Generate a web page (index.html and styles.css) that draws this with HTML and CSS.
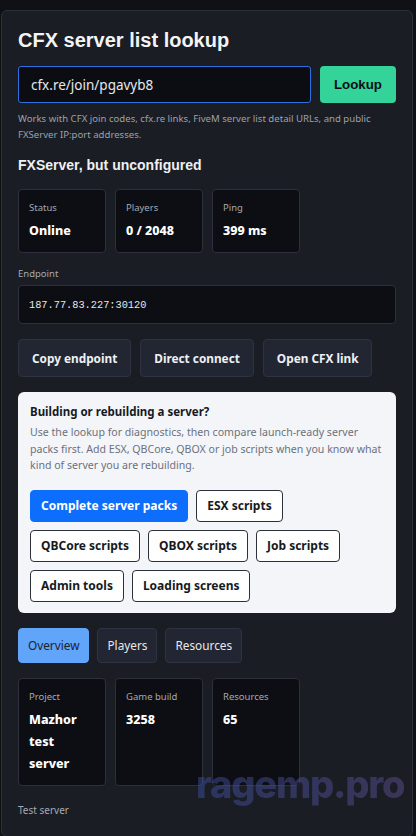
FILE: index.html
```html
<!DOCTYPE html>
<html lang="en">
<head>
  <meta charset="UTF-8">
  <title>CFX server list lookup</title>
  <meta name="viewport" content="width=device-width, initial-scale=1.0">
  <link rel="stylesheet" href="styles.css">
</head>
<body>
  <div class="panel">
    <h1 class="title">CFX server list lookup</h1>

    <div class="search">
      <input class="search-input" type="text" value="cfx.re/join/pgavyb8">
      <button class="lookup-btn">Lookup</button>
    </div>
    <p class="hint">Works with CFX join codes, cfx.re links, FiveM server list detail URLs, and public FXServer IP:port addresses.</p>

    <h2 class="server-name">FXServer, but unconfigured</h2>

    <div class="stats">
      <div class="stat">
        <div class="stat-label">Status</div>
        <div class="stat-value">Online</div>
      </div>
      <div class="stat">
        <div class="stat-label">Players</div>
        <div class="stat-value">0 / 2048</div>
      </div>
      <div class="stat">
        <div class="stat-label">Ping</div>
        <div class="stat-value">399 ms</div>
      </div>
    </div>

    <div class="field-label">Endpoint</div>
    <div class="endpoint">187.77.83.227:30120</div>

    <div class="actions">
      <button class="action-btn">Copy endpoint</button>
      <button class="action-btn">Direct connect</button>
      <button class="action-btn">Open CFX link</button>
    </div>

    <div class="promo">
      <div class="promo-title">Building or rebuilding a server?</div>
      <p class="promo-text">Use the lookup for diagnostics, then compare launch-ready server packs first. Add ESX, QBCore, QBOX or job scripts when you know what kind of server you are rebuilding.</p>
      <div class="pills">
        <a class="pill primary">Complete server packs</a>
        <a class="pill">ESX scripts</a>
        <a class="pill">QBCore scripts</a>
        <a class="pill">QBOX scripts</a>
        <a class="pill">Job scripts</a>
        <a class="pill">Admin tools</a>
        <a class="pill">Loading screens</a>
      </div>
    </div>

    <div class="tabs">
      <button class="tab active">Overview</button>
      <button class="tab">Players</button>
      <button class="tab">Resources</button>
    </div>

    <div class="stats info">
      <div class="stat">
        <div class="stat-label">Project</div>
        <div class="stat-value">Mazhor test server</div>
      </div>
      <div class="stat">
        <div class="stat-label">Game build</div>
        <div class="stat-value">3258</div>
      </div>
      <div class="stat">
        <div class="stat-label">Resources</div>
        <div class="stat-value">65</div>
      </div>
    </div>

    <p class="desc">Test server</p>
  </div>

  <div class="watermark">ragemp.pro</div>
</body>
</html>
```

FILE: styles.css
```css
body {
  margin: 0;
  background: #0f1115;
  font-family: "Noto Sans", "Open Sans", sans-serif;
  color: #e8eaee;
}
.panel {
  margin: 10px 3px 3px 1px;
  background: #1a1d24;
  border: 1px solid #2b303b;
  border-radius: 6px;
  padding: 17px 16px 18px;
}
.title {
  margin: 0 0 14px;
  font-family: "Liberation Sans", Arial, sans-serif;
  font-size: 20px; line-height: 24px; font-weight: 700;
  color: #f3f4f6;
}
.search { display: flex; gap: 9px; }
.search-input {
  flex: 1; min-width: 0; height: 37px; box-sizing: border-box;
  background: #0b0d12; border: 1px solid #2f6fe0; border-radius: 3px;
  color: #e6e8ec; padding: 0 12px;
  font-family: "Noto Sans", sans-serif; font-size: 13.5px;
  outline: none;
}
.lookup-btn {
  width: 76px; height: 37px; border: none; border-radius: 4px;
  background: #34d399; color: #0b0d12;
  font-family: "Liberation Sans", Arial, sans-serif; font-size: 13.3px; font-weight: 700;
}
.hint {
  margin: 8px 0 0;
  font-size: 9.6px; line-height: 16px; color: #9aa1ac;
}
.server-name {
  margin: 13px 0 0;
  font-family: "Liberation Sans", Arial, sans-serif;
  font-size: 14px; line-height: 18px; font-weight: 700;
  color: #eef0f3;
}
.stats {
  display: grid; grid-template-columns: repeat(3, 88px); gap: 9px;
  margin-top: 15px;
}
.stat {
  background: #0c0e13; border: 1px solid #2b303b; border-radius: 4px;
  padding: 10px 10px 10px;
}
.stat-label { font-size: 9.5px; line-height: 15px; color: #a3a9b4; }
.stat-value {
  margin-top: 5px;
  font-size: 12.5px; line-height: 22px; font-weight: 800; color: #ffffff;
}
.field-label {
  margin-top: 13px;
  font-size: 9.5px; line-height: 15px; color: #a3a9b4;
}
.endpoint {
  margin-top: 4px; height: 39px; box-sizing: border-box;
  background: #0c0e13; border: 1px solid #2b303b; border-radius: 4px;
  padding: 0 10px; display: flex; align-items: center;
  font-family: "Liberation Mono", "DejaVu Sans Mono", monospace; font-size: 10.3px;
  color: #e6e8ec;
}
.actions { display: flex; gap: 9px; margin-top: 15px; }
.action-btn {
  height: 38px; padding: 0 13px; white-space: nowrap;
  background: #222633; border: 1px solid #2e3341; border-radius: 4px;
  color: #eef0f3; font-family: "Noto Sans", sans-serif; font-size: 11.8px; font-weight: 700;
}
.promo {
  margin-top: 15px;
  background: #f4f5f9; border-radius: 6px;
  padding: 11px 12px 11px;
}
.promo-title {
  font-size: 11.5px; line-height: 18px; font-weight: 700; color: #161a22;
}
.promo-text {
  margin: 3px 0 0;
  font-size: 10.6px; line-height: 16.5px; color: #6b717c;
}
.pills { display: flex; flex-wrap: wrap; gap: 8px; margin-top: 16px; }
.pill {
  height: 32px; box-sizing: border-box; padding: 0 10px;
  display: flex; align-items: center; white-space: nowrap;
  background: #ffffff; border: 1px solid #2d313a; border-radius: 4px;
  color: #161a22; font-size: 12px; font-weight: 700;
}
.pill.primary { background: #0d6efd; border-color: #0d6efd; color: #ffffff; }
.tabs { display: flex; gap: 8px; margin-top: 15px; }
.tab {
  height: 35px; padding: 0 9px;
  background: #222633; border: 1px solid #2e3341; border-radius: 4px;
  color: #e6e8ec; font-family: "Noto Sans", sans-serif; font-size: 11.8px;
}
.tab.active { background: #60a5fa; border-color: #60a5fa; color: #1b2230; }
.info { margin-top: 15px; }
.desc {
  margin: 17px 0 0;
  font-size: 10px; line-height: 15px; color: #a3a9b4;
}
.watermark {
  position: absolute; left: 196px; top: 761px;
  font-family: Inter, "Noto Sans", sans-serif; font-size: 38px; font-weight: 800;
  letter-spacing: -1.2px;
  background: linear-gradient(90deg, #4254a8, #62549a);
  -webkit-background-clip: text; background-clip: text;
  color: transparent; opacity: 0.45;
}
```
